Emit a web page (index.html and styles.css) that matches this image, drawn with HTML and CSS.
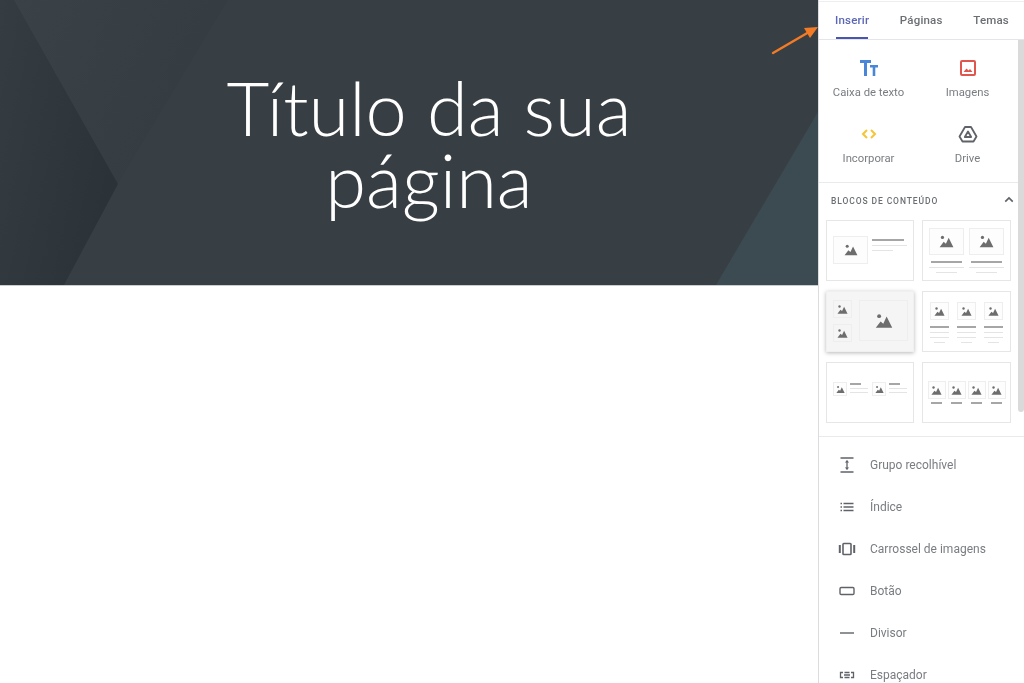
FILE: index.html
```html
<!DOCTYPE html>
<html lang="pt">
<head>
  <meta charset="utf-8">
  <title>Título da sua página</title>
  <link rel="stylesheet" href="styles.css">
</head>
<body>
<svg class="icon-defs" xmlns="http://www.w3.org/2000/svg">
  <symbol id="pic" viewBox="0 0 24 24">
    <circle cx="5.500" cy="5.500" r="2.600"/>
    <path d="M1 21l6.500-8.500 3.500 3L15.500 6 23 21z"/>
  </symbol>
</svg>

<div class="page">
  <main class="canvas">
    <header class="hero">
      <svg class="hero-bg" xmlns="http://www.w3.org/2000/svg" viewBox="0 0 818 285" preserveAspectRatio="none">
        <defs>
          <linearGradient id="leftShade" x1="0" y1="0" x2="1" y2="0.5">
            <stop offset="0" stop-color="#363d42"/>
            <stop offset="1" stop-color="#2c3338"/>
          </linearGradient>
          <linearGradient id="topShade" x1="0" y1="0" x2="1" y2="0.4">
            <stop offset="0" stop-color="#3a4147"/>
            <stop offset="1" stop-color="#353c41"/>
          </linearGradient>
        </defs>
        <rect width="818" height="285" fill="#383f44"/>
        <polygon points="14,0 228,0 118,184" fill="url(#topShade)"/>
        <polygon points="0,0 14,0 118,184 64,285 0,285" fill="url(#leftShade)"/>
        <polygon points="818,112 818,285 716,285" fill="#3c4b52"/>
      </svg>
      <h1 class="hero-title">Título da sua página</h1>
    </header>
  </main>

  <aside class="panel">
    <nav class="tabs">
      <span class="tab tab-active">Inserir</span>
      <span class="tab">Páginas</span>
      <span class="tab">Temas</span>
    </nav>

    <div class="panel-body">
      <section class="insert-grid">
        <div class="insert-item">
          <svg class="insert-icon" viewBox="0 0 20 20" fill="#4a86d8"><path d="M1 2h11v3H8v13H5V5H1z"/><path d="M11 7h8v2.400h-2.700V18h-2.600V9.400H11z"/></svg>
          <span>Caixa de texto</span>
        </div>
        <div class="insert-item">
          <svg class="insert-icon" viewBox="0 0 20 20"><rect x="3" y="3" width="14" height="14" rx="1" fill="none" stroke="#e0564c" stroke-width="2"/><path d="M5.500 14l3-3.500 2 2 1.500-1.500 2.500 3z" fill="#e0564c"/></svg>
          <span>Imagens</span>
        </div>
        <div class="insert-item">
          <svg class="insert-icon" viewBox="0 0 20 20" fill="none" stroke="#f6c533" stroke-width="2"><path d="M8 6l-4 4 4 4"/><path d="M12 6l4 4-4 4"/></svg>
          <span>Incorporar</span>
        </div>
        <div class="insert-item">
          <svg class="insert-icon" viewBox="0 0 20 20" fill="none" stroke="#5f6368" stroke-width="1.800" stroke-linejoin="round"><path d="M7 3h6l5.500 9.500-3 5h-11l-3-5z"/><path d="M10 7.500l3.200 5.500H6.800z"/></svg>
          <span>Drive</span>
        </div>
      </section>

      <section class="blocks">
        <div class="blocks-head">
          <span>Blocos de conteúdo</span>
          <svg class="chevron" viewBox="0 0 12 8" fill="none" stroke="#5f6368" stroke-width="2"><path d="M1.500 6.500L6 2l4.500 4.500"/></svg>
        </div>

        <div class="block-grid">
          <div class="block block-side">
            <div class="pic pic-wide"><svg><use href="#pic"/></svg></div>
            <div class="lines">
              <i class="line-dark line-long"></i><i></i><i class="line-short"></i>
            </div>
          </div>

          <div class="block block-cols gap-5">
            <div class="col">
              <div class="pic pic-28"><svg><use href="#pic"/></svg></div>
              <i class="line-dark line-long"></i><i></i><i class="line-short"></i>
            </div>
            <div class="col">
              <div class="pic pic-28"><svg><use href="#pic"/></svg></div>
              <i class="line-dark line-long"></i><i></i><i class="line-short"></i>
            </div>
          </div>

          <div class="block block-collage is-hover">
            <div class="collage-left">
              <div class="pic pic-18"><svg><use href="#pic"/></svg></div>
              <div class="pic pic-18"><svg><use href="#pic"/></svg></div>
            </div>
            <div class="pic pic-big"><svg><use href="#pic"/></svg></div>
          </div>

          <div class="block block-cols gap-8">
            <div class="col col-small">
              <div class="pic pic-18"><svg><use href="#pic"/></svg></div>
              <i class="line-dark"></i><i></i><i></i><i class="line-short"></i>
            </div>
            <div class="col col-small">
              <div class="pic pic-18"><svg><use href="#pic"/></svg></div>
              <i class="line-dark"></i><i></i><i></i><i class="line-short"></i>
            </div>
            <div class="col col-small">
              <div class="pic pic-18"><svg><use href="#pic"/></svg></div>
              <i class="line-dark"></i><i></i><i></i><i class="line-short"></i>
            </div>
          </div>

          <div class="block block-pairs">
            <div class="pair">
              <div class="pic pic-14"><svg><use href="#pic"/></svg></div>
              <div class="lines lines-tight"><i class="line-dark line-short"></i><i></i><i></i></div>
            </div>
            <div class="pair">
              <div class="pic pic-14"><svg><use href="#pic"/></svg></div>
              <div class="lines lines-tight"><i class="line-dark line-short"></i><i></i><i></i></div>
            </div>
          </div>

          <div class="block block-cols gap-2">
            <div class="col col-tiny">
              <div class="pic pic-17"><svg><use href="#pic"/></svg></div>
              <i class="line-dark line-short"></i>
            </div>
            <div class="col col-tiny">
              <div class="pic pic-17"><svg><use href="#pic"/></svg></div>
              <i class="line-dark line-short"></i>
            </div>
            <div class="col col-tiny">
              <div class="pic pic-17"><svg><use href="#pic"/></svg></div>
              <i class="line-dark line-short"></i>
            </div>
            <div class="col col-tiny">
              <div class="pic pic-17"><svg><use href="#pic"/></svg></div>
              <i class="line-dark line-short"></i>
            </div>
          </div>
        </div>
      </section>

      <ul class="widget-list">
        <li class="widget">
          <svg viewBox="0 0 18 18" fill="none" stroke="#5f6368" stroke-width="1.300"><path d="M2.500 2h13M2.500 16h13M9 4.500v9"/><path d="M6.800 6.500L9 4.200l2.200 2.300zM6.800 11.500L9 13.800l2.200-2.300z" fill="#5f6368" stroke="none"/></svg>
          <span>Grupo recolhível</span>
        </li>
        <li class="widget">
          <svg viewBox="0 0 18 18" fill="none" stroke="#5f6368" stroke-width="1.300"><path d="M5.500 5.500h10M5.500 9h10M5.500 12.500h10"/><path d="M2.500 5.500h1.500M2.500 9h1.500M2.500 12.500h1.500"/></svg>
          <span>Índice</span>
        </li>
        <li class="widget">
          <svg viewBox="0 0 18 18" fill="#5f6368"><rect x="0.800" y="5" width="2" height="8"/><rect x="15.200" y="5" width="2" height="8"/><rect x="5" y="3.500" width="8" height="11" rx="0.800" fill="none" stroke="#5f6368" stroke-width="1.600"/></svg>
          <span>Carrossel de imagens</span>
        </li>
        <li class="widget">
          <svg viewBox="0 0 18 18"><rect x="2" y="5.500" width="14" height="7" rx="1.200" fill="none" stroke="#5f6368" stroke-width="1.400"/></svg>
          <span>Botão</span>
        </li>
        <li class="widget">
          <svg viewBox="0 0 18 18"><path d="M2 9h14" stroke="#5f6368" stroke-width="1.400"/></svg>
          <span>Divisor</span>
        </li>
        <li class="widget">
          <svg viewBox="0 0 18 18" fill="none" stroke="#5f6368" stroke-width="1.300"><path d="M5 6.500H2.500v5H5M13 6.500h2.500v5H13"/><path d="M6.500 6.500h5M6.500 11.500h5M6 9h6"/></svg>
          <span>Espaçador</span>
        </li>
      </ul>
    </div>

    <div class="scrollbar"></div>
  </aside>

  <svg class="arrow" viewBox="0 0 48 30" xmlns="http://www.w3.org/2000/svg">
    <path d="M2 27L38 6" stroke="#f47b26" stroke-width="2.400" stroke-linecap="round"/>
    <path d="M47 1L33 2l6 10z" fill="#f47b26"/>
  </svg>
</div>
</body>
</html>
```

FILE: styles.css
```css
* {
  box-sizing: border-box;
}

html, body {
  margin: 0;
  height: 100%;
  overflow: hidden;
  background-color: #ffffff;
}

body {
  font-family: Roboto, "Liberation Sans", sans-serif;
  color: #5f6368;
}

.icon-defs {
  display: none;
}

.page {
  position: relative;
  display: flex;
  width: 1024px;
  height: 683px;
}

.canvas {
  width: 818px;
  flex: none;
}

.hero {
  position: relative;
  height: 286px;
  padding: 72px 0 0 40px;
  background-color: #383f44;
  border-bottom: 1px solid #c9cdd0;
  overflow: hidden;
}

.hero-bg {
  position: absolute;
  top: 0;
  left: 0;
  width: 100%;
  height: 100%;
}

.hero-title {
  position: relative;
  width: 520px;
  margin: 0 auto;
  font-family: Lato, "Open Sans", sans-serif;
  font-size: 74px;
  font-weight: 300;
  line-height: 72px;
  text-align: center;
  color: #ffffff;
}

.arrow {
  position: absolute;
  top: 26px;
  left: 771px;
  width: 48px;
  height: 30px;
}

/* right panel, the reference is a soft video frame */
.panel {
  position: relative;
  flex: 1;
  border-left: 1px solid #dadce0;
  overflow: hidden;
  filter: blur(0.4px);
}

.tabs {
  display: flex;
  height: 39px;
  margin-top: 1px;
  border-top: 1px solid #eceef0;
  border-bottom: 1px solid #e3e5ec;
  padding-left: 16px;
  justify-content: space-between;
  padding-right: 15px;
}

.tab {
  position: relative;
  padding-top: 11px;
  font-size: 11.500px;
  font-weight: 500;
  letter-spacing: 0.2px;
  color: #6b6f73;
}

.tab-active {
  color: #5a67b5;
}

.tab-active:after {
  content: "";
  position: absolute;
  left: 1px;
  right: 1px;
  bottom: 0;
  height: 2px;
  background-color: #4a55ac;
}

.insert-grid {
  display: grid;
  grid-template-columns: 99px 99px;
  row-gap: 23px;
  padding: 18px 0 15px;
  border-bottom: 1px solid #e8eaed;
}

.insert-item {
  display: flex;
  flex-direction: column;
  align-items: center;
  gap: 7px;
  font-size: 11.300px;
  line-height: 16px;
  color: #797d81;
}

.insert-icon {
  width: 20px;
  height: 20px;
}

.blocks {
  padding: 0 7px 13px;
  border-bottom: 1px solid #e8eaed;
}

.blocks-head {
  display: flex;
  justify-content: space-between;
  align-items: center;
  height: 37px;
  padding: 0 0 2px 5px;
  font-size: 8.500px;
  font-weight: 500;
  letter-spacing: 0.9px;
  text-transform: uppercase;
  color: #6b6f73;
}

.chevron {
  width: 10px;
  height: 7px;
  margin-bottom: 3px;
  margin-right: 3px;
}

.block-grid {
  display: grid;
  grid-template-columns: 88px 89px;
  grid-auto-rows: 61px;
  column-gap: 8px;
  row-gap: 10px;
}

.block {
  border: 1px solid #e6e6e6;
  background-color: #ffffff;
}

.is-hover {
  background-color: #f5f5f5;
  border-color: #f0f0f0;
  box-shadow: 0 1px 4px rgba(0, 0, 0, 0.28);
}

.pic {
  display: flex;
  align-items: center;
  justify-content: center;
  flex: none;
  border: 1px solid #eeeeee;
  background-color: #fdfdfd;
}

.is-hover .pic {
  background-color: #f5f5f5;
}

.pic svg {
  fill: #6d6d6d;
}

.pic-wide { width: 35px; height: 28px; }
.pic-wide svg { width: 14px; height: 14px; }
.pic-28 { width: 35px; height: 27px; }
.pic-28 svg { width: 15px; height: 15px; }
.pic-18 { width: 19px; height: 18px; }
.pic-18 svg { width: 11px; height: 11px; }
.pic-17 { width: 18px; height: 18px; }
.pic-17 svg { width: 11px; height: 11px; }
.pic-14 { width: 14px; height: 14px; }
.pic-14 svg { width: 9px; height: 9px; }
.pic-big { width: 49px; height: 41px; }
.pic-big svg { width: 18px; height: 18px; }

/* small grey lines inside the block previews */
.block i {
  display: block;
  height: 1px;
  width: 100%;
  background-color: #e4e4e4;
}

.block i.line-dark {
  height: 2px;
  background-color: #a6a6a6;
}

.block i.line-long {
  width: 90%;
}

.block i.line-short {
  width: 60%;
  align-self: center;
}

.block .lines i.line-short {
  align-self: flex-start;
}

.block-side {
  display: flex;
  gap: 4px;
  padding: 15px 6px 0;
}

.lines {
  display: flex;
  flex-direction: column;
  flex: 1;
  gap: 4px;
  padding-top: 3px;
}

.block-cols {
  display: flex;
  justify-content: center;
}

.gap-5 { gap: 5px; padding-top: 7px; }
.gap-8 { gap: 8px; padding-top: 10px; }
.gap-2 { gap: 2px; padding-top: 18px; }

.col {
  display: flex;
  flex-direction: column;
  align-items: center;
  gap: 4px;
  width: 35px;
}

.col .pic + .line-dark {
  margin-top: 2px;
}

.col-small {
  width: 19px;
}

.col-tiny {
  width: 18px;
  gap: 1px;
}

.block-collage {
  display: flex;
  gap: 7px;
  padding: 8px 6px;
}

.collage-left {
  display: flex;
  flex-direction: column;
  justify-content: space-between;
  height: 42px;
}

.block-pairs {
  display: flex;
  gap: 4px;
  padding: 19px 6px 0;
}

.pair {
  display: flex;
  flex: 1;
  gap: 3px;
}

.lines-tight {
  gap: 3px;
  padding-top: 1px;
}

.widget-list {
  list-style: none;
  margin: 0;
  padding: 7px 0 0 19px;
}

.widget {
  display: flex;
  align-items: center;
  gap: 14px;
  height: 42px;
  font-size: 12px;
  color: #797d81;
}

.widget svg {
  width: 18px;
  height: 18px;
  flex: none;
}

.scrollbar {
  position: absolute;
  top: 40px;
  right: 0;
  width: 6px;
  height: 372px;
  border-radius: 0 0 3px 3px;
  background-color: #dadada;
}
```
